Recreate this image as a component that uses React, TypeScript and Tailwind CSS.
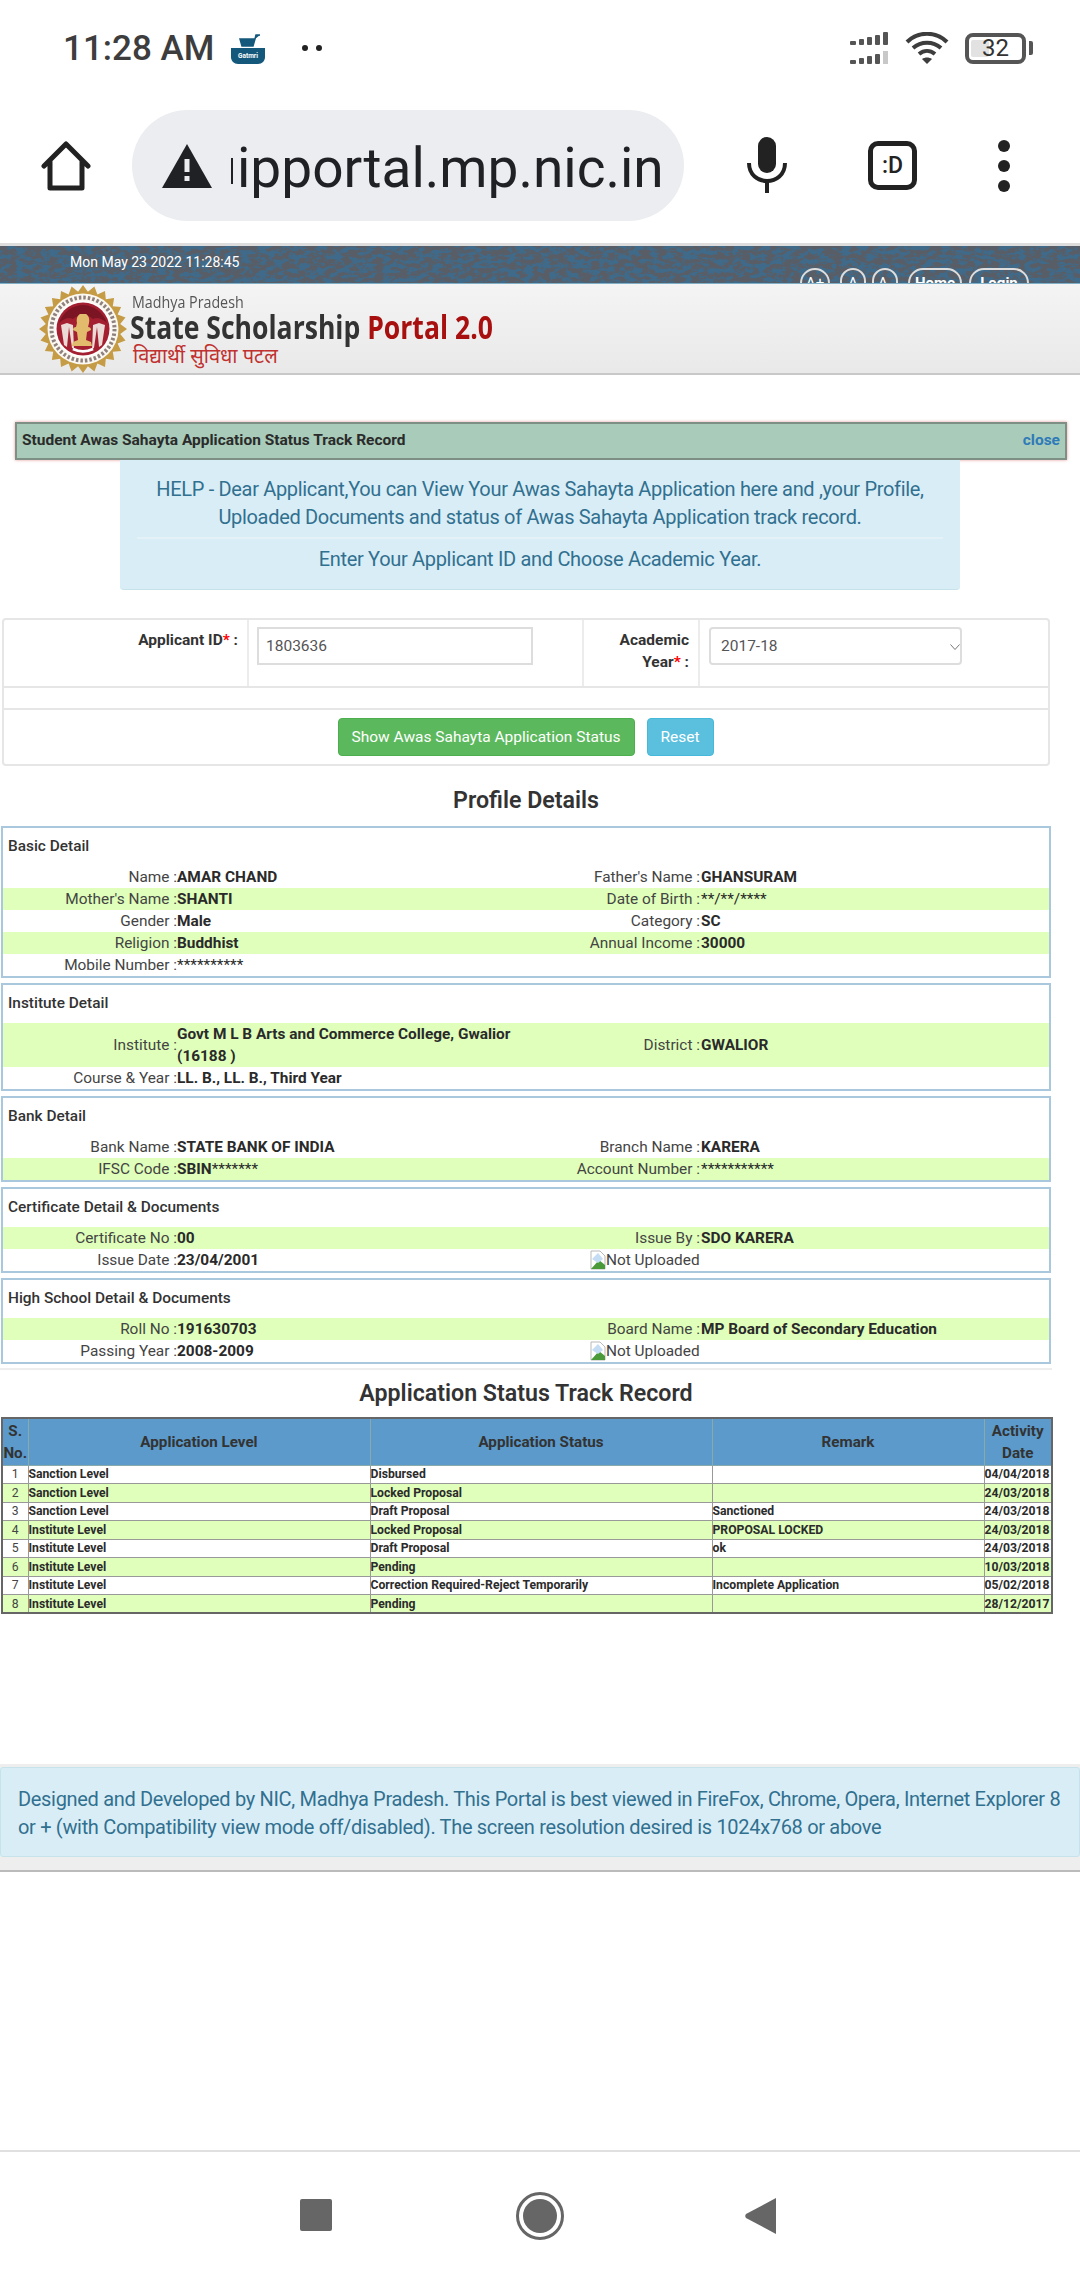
import { FC, ReactNode } from "react";

const GREEN = "bg-[#dfffba]";

const burst = () => {
  const pts: string[] = [];
  for (let i = 0; i < 48; i++) {
    const r = i % 2 === 0 ? 44 : 37.5;
    const a = (i * Math.PI) / 24;
    pts.push(`${(44 + r * Math.sin(a)).toFixed(1)},${(44 - r * Math.cos(a)).toFixed(1)}`);
  }
  return pts.join(" ");
};

const Emblem = () => (
  <svg width="88" height="88" viewBox="0 0 88 88" className="shrink-0">
    <polygon points={burst()} fill="#c59c45" />
    <circle cx="44" cy="44" r="35.5" fill="#fbf8f2" />
    <circle cx="44" cy="44" r="31.5" fill="none" stroke="#6b5a55" strokeWidth="4" strokeDasharray="2.5 2" opacity="0.75" />
    <circle cx="44" cy="44" r="28" fill="#fff" />
    <circle cx="44" cy="44" r="26.5" fill="#a41f30" />
    <path d="M20 38c4-12 15-18 24-18s20 6 24 18c-6-5-10-6-14-4-6-5-14-5-20 0-4-2-8-1-14 4z" fill="#7c1523" />
    <path d="M22 40l3 20 3 2 2-20 3 21 2 1-1-24-6-2zM66 40l-3 20-3 2-2-20-3 21-2 1 1-24 6-2z" fill="#ead9d4" />
    <path d="M38 38c-1-5 1-8 3-9h6c2 1 4 4 3 9l-1 4c2 0 3 1 3 3l-4 2-1 8 5 2 1 4H33l1-4 5-2-1-8-4-2c0-2 1-3 3-3z" fill="#e2bc6c" />
    <path d="M34 64c6 3 14 3 20 0" fill="none" stroke="#fff" strokeWidth="3" />
  </svg>
);

const StatusBar = () => (
  <div className="h-[96px] shrink-0 flex items-center pl-[63px] pr-[47px]">
    <span className="text-[35px] font-medium text-[#3d3d3d] leading-none w-[167px]">11:28 AM</span>
    <svg width="36" height="32" viewBox="0 0 36 32">
      <rect x="1" y="0" width="34" height="32" rx="7" fill="#fff" />
      <path d="M1 16h34v9c0 4-3 7-7 7H8c-4 0-7-3-7-7z" fill="#14597c" />
      <path d="M10 7h15l-2 7H12zM25 7l1-4h4" fill="#14597c" stroke="#14597c" strokeWidth="1.5" />
      <text x="18" y="26" textAnchor="middle" fontSize="6.5" fontWeight="700" fill="#fff">Gatmri</text>
    </svg>
    <div className="ml-[36px] flex gap-[8px]">
      <span className="w-[6px] h-[6px] rounded-full bg-[#222]" />
      <span className="w-[6px] h-[6px] rounded-full bg-[#222]" />
    </div>
    <div className="ml-auto flex items-center">
      <svg width="40" height="32" viewBox="0 0 40 32" fill="#555">
        <rect x="0" y="9" width="6" height="4" rx="1" /><rect x="9" y="7" width="5" height="6" rx="1" /><rect x="17" y="5" width="5" height="8" rx="1" /><rect x="25" y="3" width="5" height="10" rx="1" /><rect x="33" y="0" width="5" height="13" rx="1" />
        <rect x="0" y="28" width="6" height="4" rx="1" /><rect x="9" y="26" width="5" height="6" rx="1" /><rect x="17" y="24" width="5" height="8" rx="1" /><rect x="25" y="22" width="5" height="10" rx="1" /><rect x="33" y="19" width="5" height="13" fill="#c8c8c8" />
      </svg>
      <svg width="44" height="32" viewBox="0 0 44 32" fill="none" stroke="#3d3d3d" strokeWidth="4" className="ml-[15px]">
        <path d="M2 10c11-11 29-11 40 0M8 16c8-7 20-7 28 0M14 22c5-4 11-4 16 0" />
        <path d="M22 32l-5-5c3-2 7-2 10 0z" fill="#3d3d3d" stroke="none" />
      </svg>
      <div className="ml-[16px] flex items-center">
        <div className="w-[61px] h-[31px] border-[4px] border-[#555] rounded-[8px] relative flex items-center justify-center">
          <span className="absolute left-[2px] top-[3px] bottom-[3px] w-[18px] bg-[#e2e2e2] rounded-[2px]" />
          <span className="relative text-[24px] text-[#333] leading-none">32</span>
        </div>
        <span className="w-[4px] h-[14px] bg-[#555] ml-[3px] rounded-r-[2px]" />
      </div>
    </div>
  </div>
);

const Toolbar = () => (
  <div className="h-[147px] shrink-0 flex items-start pt-[14px] relative">
    <svg width="50" height="50" viewBox="0 0 50 50" fill="none" stroke="#222" strokeWidth="5" strokeLinejoin="round" strokeLinecap="round" className="ml-[41px] mt-[31px]">
      <path d="M3 25L25 3l22 22M9 20v27h32V20" />
    </svg>
    <div className="ml-[41px] w-[552px] h-[111px] rounded-[56px] bg-[#ebedf0] flex items-center pl-[30px] overflow-hidden">
      <svg width="50" height="44" viewBox="0 0 50 44" className="shrink-0">
        <path d="M25 0l25 44H0z" fill="#202124" />
        <rect x="22.5" y="15" width="5" height="13" fill="#ebedf0" />
        <rect x="22.5" y="32" width="5" height="5" fill="#ebedf0" />
      </svg>
      <span className="w-[2px] h-[26px] bg-[#202124] ml-[19px] mt-[10px] shrink-0" />
      <span className="ml-[4px] text-[55px] leading-none text-[#202124] whitespace-nowrap pt-[6px]">ipportal.mp.nic.in</span>
    </div>
    <svg width="40" height="56" viewBox="0 0 40 56" className="ml-[63px] mt-[27px]">
      <rect x="11" y="0" width="18" height="36" rx="9" fill="#222" />
      <path d="M2 26c0 24 36 24 36 0" fill="none" stroke="#222" strokeWidth="4" />
      <rect x="18" y="42" width="4" height="14" fill="#222" />
    </svg>
    <div className="ml-[81px] mt-[31px] w-[49px] h-[49px] border-[5px] border-[#222] rounded-[10px] flex items-center justify-center text-[23px] font-medium text-[#222] leading-none">:D</div>
    <div className="ml-[81px] mt-[30px] flex flex-col gap-[8px]">
      <span className="w-[12px] h-[12px] rounded-full bg-[#222]" />
      <span className="w-[12px] h-[12px] rounded-full bg-[#222]" />
      <span className="w-[12px] h-[12px] rounded-full bg-[#222]" />
    </div>
  </div>
);

const Banner = () => (
  <div className="border-t-[3px] border-[#dddddd] h-[40px] shrink-0 relative overflow-hidden bg-[#3f6a8a]">
    <svg className="absolute inset-0" width="1080" height="37">
      <filter id="rock" x="0" y="0" width="100%" height="100%">
        <feTurbulence type="fractalNoise" baseFrequency="0.12 0.22" numOctaves="5" seed="11" />
        <feColorMatrix values="0 0 0 0 0.1  0 0 0 0 0.11  0 0 0 0 0.13  4.5 4.5 0 0 -3.9" />
      </filter>
      <rect width="1080" height="37" filter="url(#rock)" />
    </svg>
    <span className="absolute left-[70px] top-[6px] text-[14px] leading-[20px] text-white">Mon May 23 2022 11:28:45</span>
    <div className="absolute left-[800px] top-[22px] flex text-white font-bold text-[15px] leading-[26px]">
      <span className="w-[30px] h-[30px] border-2 border-[#ddd] rounded-full text-center font-normal">A+</span>
      <span className="w-[26px] h-[30px] ml-[10px] border-2 border-[#ddd] rounded-full text-center font-normal">A</span>
      <span className="w-[26px] h-[30px] ml-[6px] border-2 border-[#ddd] rounded-full text-center font-normal">A-</span>
      <span className="w-[54px] h-[30px] ml-[10px] border-2 border-[#ddd] rounded-[15px] text-center">Home</span>
      <span className="w-[60px] h-[30px] ml-[7px] border-2 border-[#ddd] rounded-[15px] text-center">Login</span>
    </div>
  </div>
);

const SiteHeader = () => (
  <div className="h-[92px] shrink-0 border-t border-[#7fb0c8] border-b-[2px] border-b-[#c8c8c8] bg-gradient-to-b from-[#f4f4f4] to-[#e9e9e9] flex items-center pl-[39px]">
    <Emblem />
    <div className="ml-[3px] font-['Open_Sans',sans-serif] leading-none pt-[3px]">
      <div className="text-[16.5px] text-[#555] h-[17px] leading-[17px] ml-[2px] origin-left scale-x-[.865] whitespace-nowrap">Madhya Pradesh</div>
      <div className="text-[32px] font-bold h-[34px] leading-[34px] whitespace-nowrap text-[#333] origin-left scale-x-[.83]">
        State Scholarship <span className="text-[#a80f0f]">Portal 2.0</span>
      </div>
      <div className="text-[20px] leading-[24px] text-[#c0312f] ml-[3px] font-['Noto_Sans',sans-serif]">विद्यार्थी सुविधा पटल</div>
    </div>
  </div>
);

const FormCard = () => (
  <div className="ml-[2px] mt-[28px] w-[1048px] border-2 border-[#e6e6e6] rounded-[4px] text-[15.5px] leading-[22px] text-[#333]">
    <div className="h-[68px] flex border-b-2 border-[#e6e6e6]">
      <div className="w-[245px] pr-[9px] pt-[9px] text-right font-bold border-r-2 border-[#ececec]">
        Applicant ID<span className="text-[#ff0000]">*</span> :
      </div>
      <div className="w-[335px] pl-[8px] pt-[7px] border-r-2 border-[#ececec]">
        <input
          readOnly
          value="1803636"
          className="w-[276px] h-[38px] px-[7px] border-2 border-[#dddddd] text-[#555] outline-none"
        />
      </div>
      <div className="w-[116px] pr-[9px] pt-[9px] text-right font-bold border-r-2 border-[#ececec]">
        Academic
        <br />
        Year<span className="text-[#ff0000]">*</span> :
      </div>
      <div className="pl-[9px] pt-[7px] relative">
        <select
          defaultValue="2017-18"
          className="w-[253px] h-[38px] pl-[10px] border-2 border-[#dddddd] rounded-[4px] text-[#555] bg-white appearance-none outline-none"
        >
          <option>2017-18</option>
        </select>
        <svg width="10" height="6" viewBox="0 0 10 6" fill="none" stroke="#777" className="absolute left-[250px] top-[24px]">
          <path d="M0.5 0.5L5 5.5L9.5 0.5" />
        </svg>
      </div>
    </div>
    <div className="h-[22px] border-b-2 border-[#e6e6e6]" />
    <div className="h-[54px] flex justify-center items-start pt-[8px] gap-[12px] text-white">
      <button className="w-[297px] h-[38px] rounded-[4px] bg-[#5cb85c] border border-[#4cae4c] ml-[-1px]">Show Awas Sahayta Application Status</button>
      <button className="w-[67px] h-[38px] rounded-[4px] bg-[#5bc0de] border border-[#46b8da]">Reset</button>
    </div>
  </div>
);

type Pair = { label: string; value?: ReactNode; raw?: ReactNode };

const Cell: FC<Pair & { right?: boolean }> = ({ label, value, raw, right }) => (
  <div className={`flex items-center ${right ? "w-[525px]" : "w-[523px]"}`}>
    {raw ? (
      raw
    ) : (
      <>
        <span className={`text-right text-[#444] shrink-0 whitespace-nowrap ${right ? "w-[176px]" : "w-[174px]"}`}>{label} :</span>
        <span className={`font-bold text-[#2a2a2a] ${right ? "ml-[1px]" : "w-[340px]"}`}>{value}</span>
      </>
    )}
  </div>
);

const NotUploaded = () => (
  <div className="flex items-center ml-[66px] text-[#444]">
    <svg width="16" height="20" viewBox="0 0 16 20" className="shrink-0">
      <path d="M1 1h9l5 5v13H1z" fill="#fff" stroke="#b9b9b9" />
      <path d="M1 19l8-9 6 5v4z" fill="#4a9a3a" />
      <path d="M2 9l6-6 5 6-5 4z" fill="#c4dcf4" />
    </svg>
    <span>Not Uploaded</span>
  </div>
);

const Row: FC<{ left: Pair; right?: Pair; green?: boolean; tall?: boolean }> = ({ left, right, green, tall }) => (
  <div className={`flex ${tall ? "h-[44px]" : "h-[22px]"} ${green ? GREEN : ""}`}>
    <Cell {...left} />
    {right ? (
      <div className="flex flex-1">
        <Cell {...right} right />
      </div>
    ) : null}
  </div>
);

const Box: FC<{ title: string; className: string; children: ReactNode }> = ({ title, className, children }) => (
  <section className={`ml-[1px] w-[1050px] border-2 border-[#a9c7dd] text-[15.4px] leading-[22px] ${className}`}>
    <h3 className="h-[38px] pl-[5px] pt-[7px] text-[#333] font-medium">{title}</h3>
    {children}
  </section>
);

const tracks = [
  ["1", "Sanction Level", "Disbursed", "", "04/04/2018"],
  ["2", "Sanction Level", "Locked Proposal", "", "24/03/2018"],
  ["3", "Sanction Level", "Draft Proposal", "Sanctioned", "24/03/2018"],
  ["4", "Institute Level", "Locked Proposal", "PROPOSAL LOCKED", "24/03/2018"],
  ["5", "Institute Level", "Draft Proposal", "ok", "24/03/2018"],
  ["6", "Institute Level", "Pending", "", "10/03/2018"],
  ["7", "Institute Level", "Correction Required-Reject Temporarily", "Incomplete Application", "05/02/2018"],
  ["8", "Institute Level", "Pending", "", "28/12/2017"],
];

const TrackTable = () => (
  <table className="ml-[1px] w-[1050px] table-fixed border-collapse border-2 border-[#666] text-[#2b2b2b]">
    <colgroup>
      <col className="w-[26px]" />
      <col className="w-[342px]" />
      <col className="w-[342px]" />
      <col className="w-[272px]" />
      <col className="w-[68px]" />
    </colgroup>
    <thead>
      <tr className="h-[47px] bg-[#5b9aca] text-[15.2px] leading-[22px] font-bold text-center text-[#333]">
        <th className="border border-[#8aa] p-0">S. No.</th>
        <th className="border border-[#8aa] p-0">Application Level</th>
        <th className="border border-[#8aa] p-0">Application Status</th>
        <th className="border border-[#8aa] p-0">Remark</th>
        <th className="border border-[#8aa] p-0">Activity Date</th>
      </tr>
    </thead>
    <tbody>
      {tracks.map((t, i) => (
        <tr key={t[0]} className={`h-[18.5px] text-[12.2px] leading-[16px] ${i % 2 ? GREEN : "bg-white"}`}>
          <td className="border border-[#999] p-0 text-center text-[#444]">{t[0]}</td>
          <td className="border border-[#999] p-0 font-bold">{t[1]}</td>
          <td className="border border-[#999] p-0 font-bold">{t[2]}</td>
          <td className="border border-[#999] p-0 font-bold">{t[3]}</td>
          <td className="border border-[#999] p-0 font-bold">{t[4]}</td>
        </tr>
      ))}
    </tbody>
  </table>
);

const Footer = () => (
  <div className="mt-[150px] bg-[#eeeeee] pt-[3px] pb-[13px] border-b-2 border-[#bbbbbb]">
    <div className="h-[90px] bg-[#d9edf7] border border-[#c6e3ec] rounded-[3px] pl-[17px] pt-[17px] text-[20px] leading-[28px] tracking-[-0.32px] text-[#31708f] whitespace-nowrap">
      Designed and Developed by NIC, Madhya Pradesh. This Portal is best viewed in FireFox, Chrome, Opera, Internet Explorer 8
      <br />
      or + (with Compatibility view mode off/disabled). The screen resolution desired is 1024x768 or above
    </div>
  </div>
);

const NavBar = () => (
  <div className="mt-auto h-[130px] shrink-0 border-t-2 border-[#e0e0e0] flex items-start pt-[47px] pl-[300px]">
    <span className="w-[32px] h-[32px] rounded-[2px] bg-[#666]" />
    <span className="ml-[184px] w-[48px] h-[48px] -mt-[7px] rounded-full border-[3px] border-[#666] flex items-center justify-center">
      <span className="w-[34px] h-[34px] rounded-full bg-[#666]" />
    </span>
    <svg width="32" height="36" viewBox="0 0 32 36" className="ml-[181px] -mt-[1px]">
      <path d="M31 0v36L1 20c-1-1-1-3 0-4z" fill="#666" />
    </svg>
  </div>
);

export default function App() {
  return (
    <div className="w-[1080px] h-[2280px] bg-white flex flex-col overflow-hidden font-['Roboto',sans-serif]">
      <StatusBar />
      <Toolbar />
      <Banner />
      <SiteHeader />

      <div className="ml-[15px] mt-[47px] w-[1052px] h-[38px] bg-[#a8ccb9] border-2 border-[#7e8f86] shadow-[0_0_3px_#e89a9a] flex items-center justify-between pl-[5px] pr-[5px] text-[15.5px] font-bold">
        <span className="text-[#2b2b2b]">Student Awas Sahayta Application Status Track Record</span>
        <span className="text-[#2f7ab8]">close</span>
      </div>

      <div className="ml-[120px] w-[840px] h-[130px] bg-[#d9edf7] border-b border-[#c6e3ec] rounded-b-[4px] px-[17px] pt-[15px] text-[20px] leading-[28px] tracking-[-0.32px] text-[#31708f] text-center">
        <p>
          HELP - Dear Applicant,You can View Your Awas Sahayta Application here and ,your Profile,
          <br />
          Uploaded Documents and status of Awas Sahayta Application track record.
        </p>
        <hr className="mt-[6px] border-t-2 border-[#e4f1f7]" />
        <p className="mt-[6px]">Enter Your Applicant ID and Choose Academic Year.</p>
      </div>

      <FormCard />

      <h2 className="w-[1052px] h-[60px] pt-[19px] text-center text-[23.2px] leading-[30px] font-semibold text-[#333]">Profile Details</h2>

      <Box title="Basic Detail" className="h-[152px]">
        <Row left={{ label: "Name", value: "AMAR CHAND" }} right={{ label: "Father's Name", value: "GHANSURAM" }} />
        <Row green left={{ label: "Mother's Name", value: "SHANTI" }} right={{ label: "Date of Birth", value: <span className="font-normal">**/**/****</span> }} />
        <Row left={{ label: "Gender", value: "Male" }} right={{ label: "Category", value: "SC" }} />
        <Row green left={{ label: "Religion", value: "Buddhist" }} right={{ label: "Annual Income", value: "30000" }} />
        <Row left={{ label: "Mobile Number", value: <span className="font-normal">**********</span> }} />
      </Box>

      <Box title="Institute Detail" className="mt-[5px] h-[108px]">
        <Row green tall left={{ label: "Institute", value: "Govt M L B Arts and Commerce College, Gwalior (16188 )" }} right={{ label: "District", value: "GWALIOR" }} />
        <Row left={{ label: "Course & Year", value: "LL. B., LL. B., Third Year" }} />
      </Box>

      <Box title="Bank Detail" className="mt-[5px] h-[86px]">
        <Row left={{ label: "Bank Name", value: "STATE BANK OF INDIA" }} right={{ label: "Branch Name", value: "KARERA" }} />
        <Row green left={{ label: "IFSC Code", value: <>SBIN<span className="font-normal">*******</span></> }} right={{ label: "Account Number", value: <span className="font-normal">***********</span> }} />
      </Box>

      <Box title="Certificate Detail & Documents" className="mt-[5px] h-[86px]">
        <Row green left={{ label: "Certificate No", value: "00" }} right={{ label: "Issue By", value: "SDO KARERA" }} />
        <Row left={{ label: "Issue Date", value: "23/04/2001" }} right={{ label: "", raw: <NotUploaded /> }} />
      </Box>

      <Box title="High School Detail & Documents" className="mt-[5px] h-[86px]">
        <Row green left={{ label: "Roll No", value: "191630703" }} right={{ label: "Board Name", value: "MP Board of Secondary Education" }} />
        <Row left={{ label: "Passing Year", value: "2008-2009" }} right={{ label: "", raw: <NotUploaded /> }} />
      </Box>

      <hr className="mt-[4px] w-[1052px] border-t-2 border-[#eeeeee]" />

      <h2 className="w-[1052px] h-[47px] pt-[8px] text-center text-[23.2px] leading-[30px] font-semibold text-[#333]">Application Status Track Record</h2>

      <TrackTable />
      <Footer />
      <NavBar />
    </div>
  );
}
